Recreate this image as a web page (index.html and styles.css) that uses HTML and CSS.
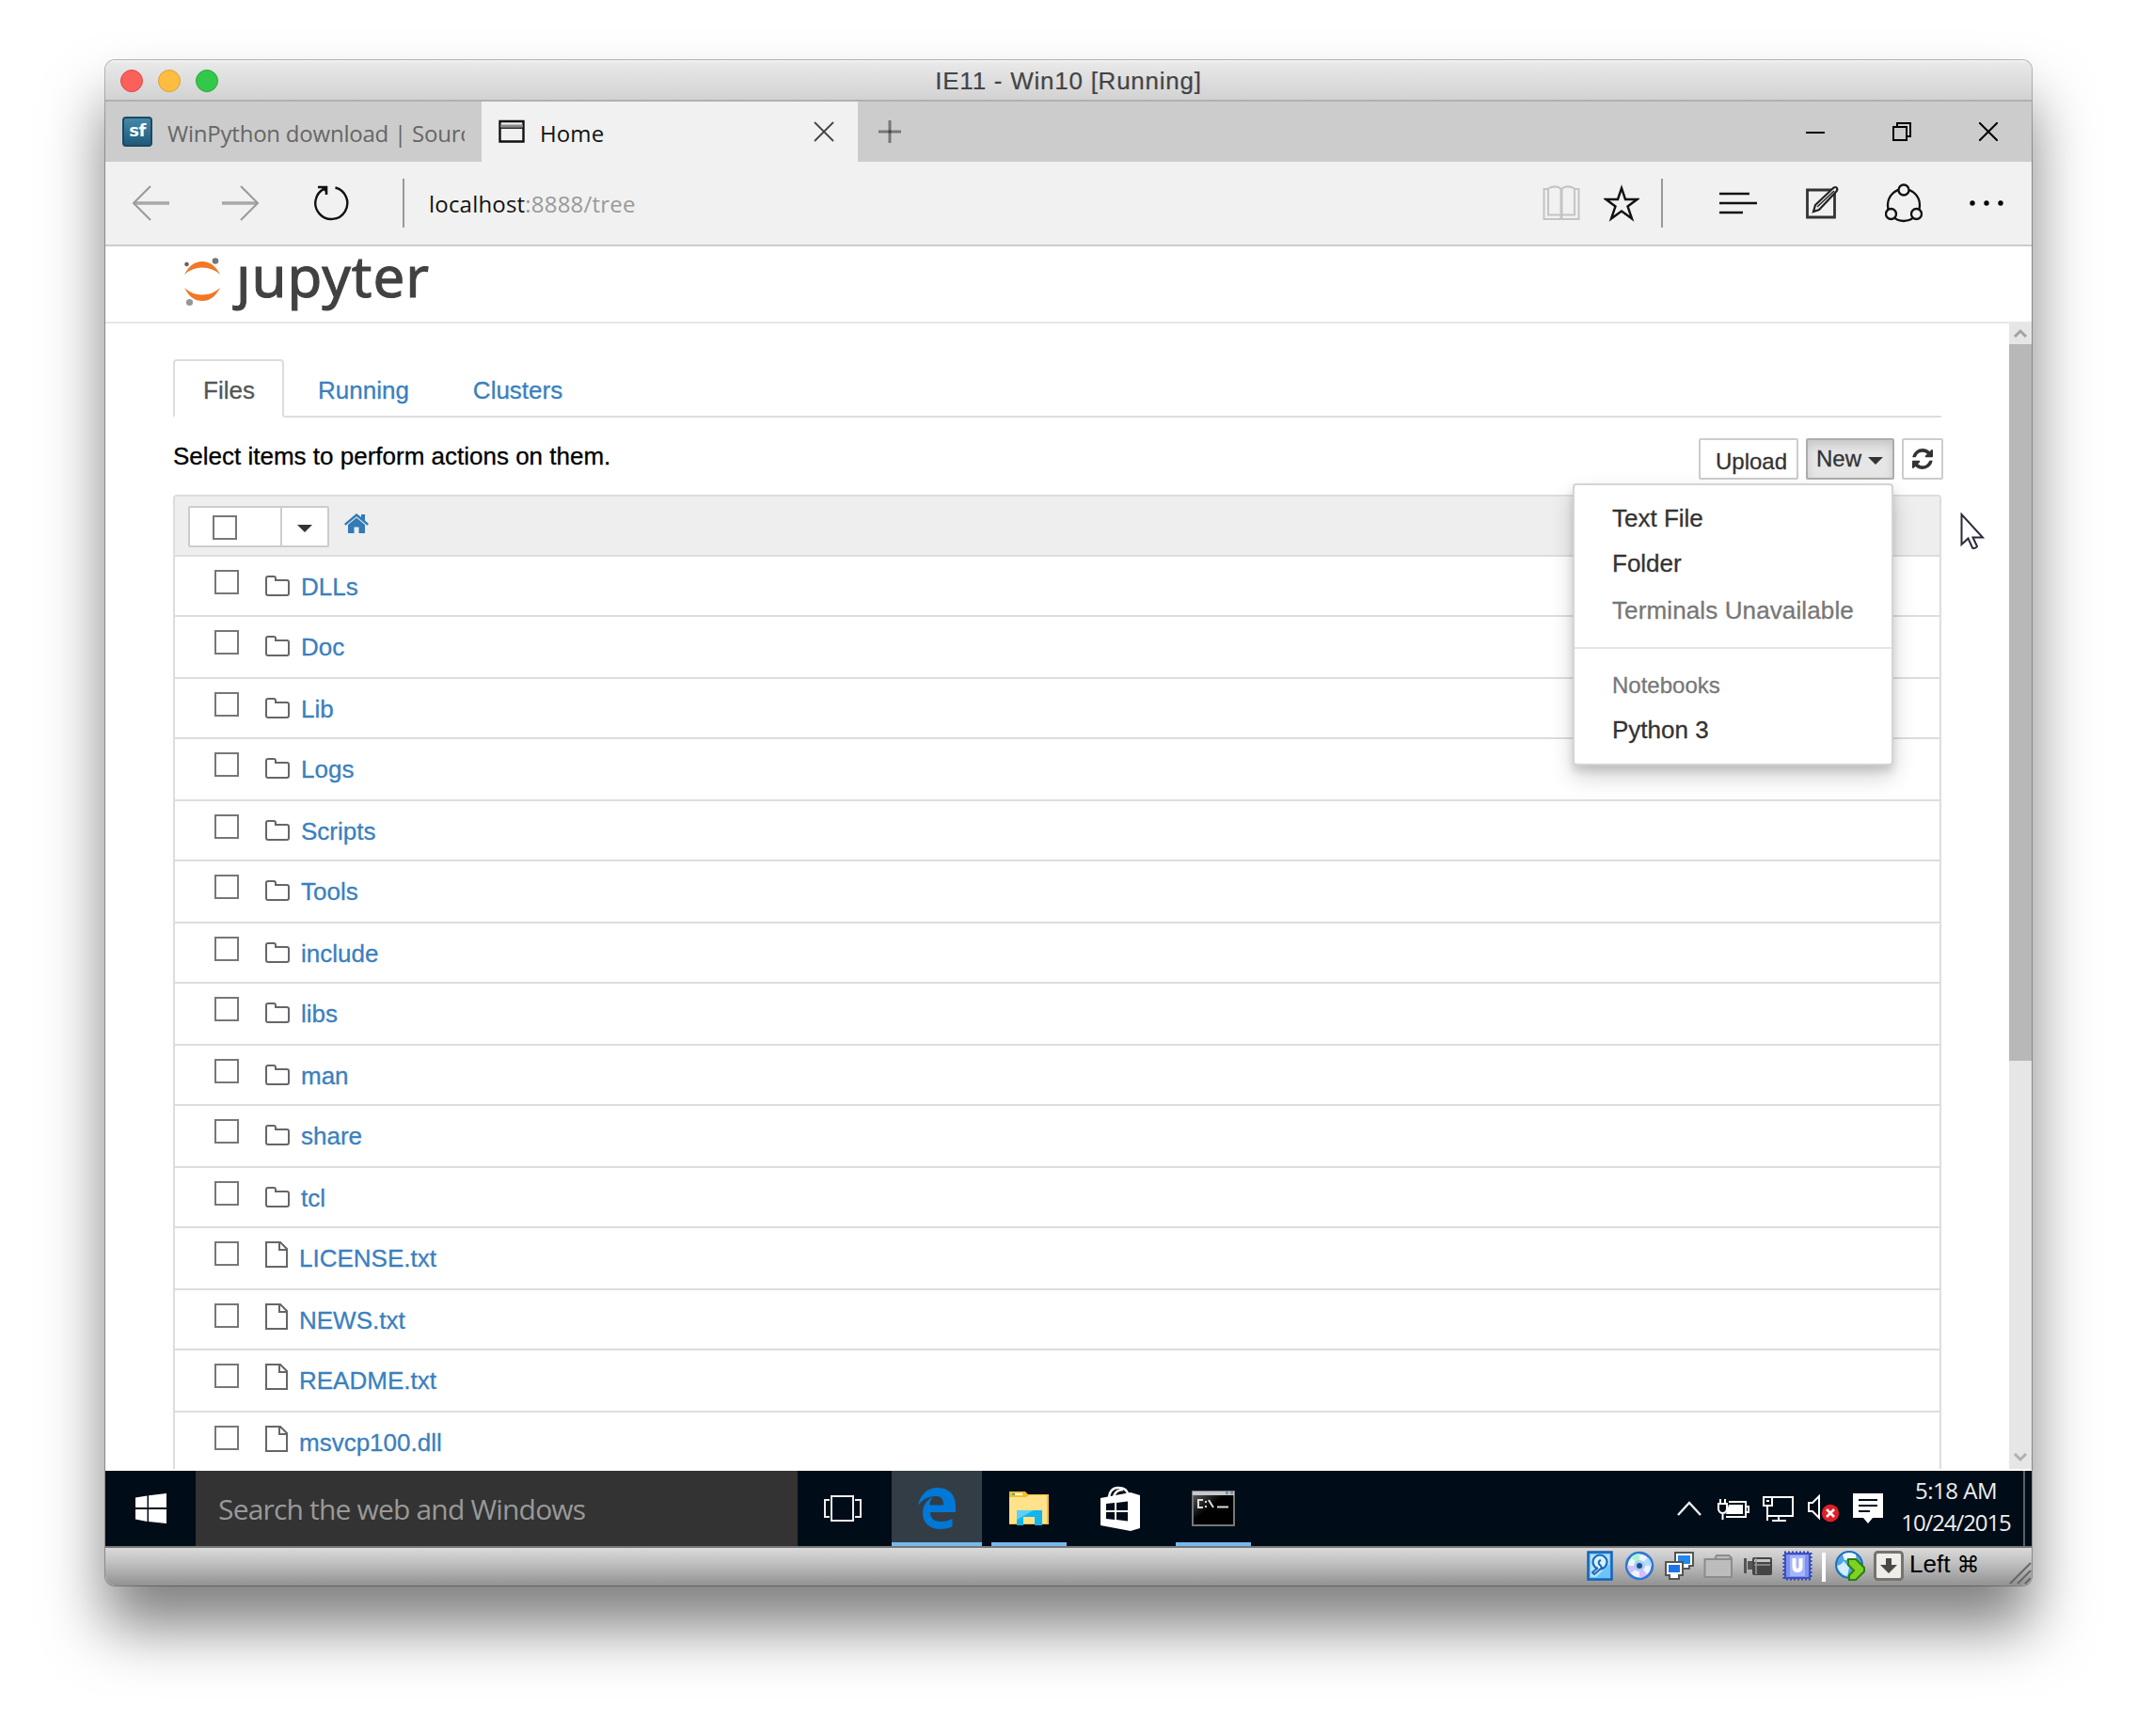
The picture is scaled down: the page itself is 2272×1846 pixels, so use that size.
FILE: index.html
```html
<!DOCTYPE html>
<html lang="en">
<head>
<meta charset="utf-8">
<title>IE11 - Win10 [Running]</title>
<link rel="stylesheet" href="styles.css">
</head>
<body>
<div class="window">
  <header class="titlebar">
    <div class="lights"><i class="light red"></i><i class="light amber"></i><i class="light green"></i></div>
    <span class="title">IE11 - Win10 [Running]</span>
  </header>

  <div class="tabbar">
    <div class="btab">
      <span class="favicon">sf</span>
      <span class="btab-text">WinPython download | SourceForge</span>
    </div>
    <div class="btab active">
      <svg class="home-ico" width="28" height="26" viewBox="0 0 28 26"><path d="M1.500 2h25v21.500h-25z" fill="none" stroke="#111" stroke-width="2.400"/><path d="M2 7h24" stroke="#888" stroke-width="3"/><path d="M2 9.200h24" stroke="#222" stroke-width="1.500"/></svg>
      <span class="btab-text">Home</span>
      <svg class="tab-close" width="22" height="22" viewBox="0 0 22 22"><path d="M1 1l20 20M21 1L1 21" stroke="#444" stroke-width="1.800"/></svg>
    </div>
    <svg class="newtab" width="24" height="24" viewBox="0 0 24 24"><path d="M12 0v24M0 12h24" stroke="#777" stroke-width="3"/><path d="M10.500 10.500h3v3h-3z" fill="#444"/></svg>
    <div class="winbtns">
      <svg width="20" height="20" viewBox="0 0 20 20"><path d="M0 11h20" stroke="#000" stroke-width="2"/></svg>
      <svg width="20" height="20" viewBox="0 0 20 20"><path d="M1 5h14v14H1zM5 5V1h14v14h-4" fill="none" stroke="#000" stroke-width="2"/></svg>
      <svg width="20" height="20" viewBox="0 0 20 20"><path d="M0 0l20 20M20 0L0 20" stroke="#000" stroke-width="2"/></svg>
    </div>
  </div>

  <div class="toolbar">
    <svg class="back" width="40" height="38" viewBox="0 0 40 38"><path d="M2 19h38" stroke="#a8a8a8" stroke-width="3.500"/><path d="M20 1L2 19l18 18" fill="none" stroke="#999" stroke-width="2"/></svg>
    <svg class="fwd" width="40" height="38" viewBox="0 0 40 38"><path d="M0 19h38" stroke="#a8a8a8" stroke-width="3.500"/><path d="M20 1l18 18-18 18" fill="none" stroke="#999" stroke-width="2"/></svg>
    <svg class="reload" width="38" height="38" viewBox="0 0 38 38"><path d="M23.500 2.500A17 17 0 1 1 12 3.600" fill="none" stroke="#111" stroke-width="2.400"/><path d="M5 2h9v8" fill="none" stroke="#111" stroke-width="2.600"/><path d="M7 1h8v8z" fill="#111"/></svg>
    <i class="vline"></i>
    <span class="url">localhost<span>:8888/tree</span></span>
    <div class="tools">
      <svg class="t-book" width="40" height="38" viewBox="0 0 40 38"><g fill="none" stroke="#c4c4c4" stroke-width="2"><path d="M6 4H1.500v32h37V4H34M6 31.500V3.500Q14 -1 20 4q6-5 14-.5v28H6z"/><path d="M20 4v31" stroke-width="3"/></g></svg>
      <svg class="t-star" width="38" height="40" viewBox="0 0 38 40"><path d="M19 4l4 12h12.500L25.500 23.500l4.500 13L19 28.500 8 36.500l4.500-13L2.500 16H15z" fill="none" stroke="#111" stroke-width="2.400"/></svg>
      <i class="vline t-line"></i>
      <svg class="t-hub" width="40" height="26" viewBox="0 0 40 26"><path d="M0 3h32M0 13h40M0 23h25" stroke="#111" stroke-width="2.600"/></svg>
      <svg class="t-note" width="36" height="38" viewBox="0 0 36 38"><path d="M1.500 5h29v29h-29z" fill="none" stroke="#333" stroke-width="2.800"/><path d="M8 28l2-7L29 3q3-2 4 0 1 2-1 4L14 26z" fill="#f1f1f1" stroke="#222" stroke-width="2.200"/><path d="M12 23L30 6" stroke="#222" stroke-width="1.500"/></svg>
      <svg class="t-share" width="40" height="42" viewBox="0 0 40 42"><g fill="none" stroke="#111" stroke-width="2.300"><circle cx="20" cy="23" r="17"/><g fill="#f1f1f1"><circle cx="20" cy="7" r="5.500"/><circle cx="6.500" cy="32.500" r="5.500"/><circle cx="33.500" cy="32.500" r="5.500"/></g></g></svg>
      <svg class="t-dots" width="38" height="8" viewBox="0 0 38 8"><circle cx="4" cy="4" r="2.700"/><circle cx="19" cy="4" r="2.700"/><circle cx="34" cy="4" r="2.700"/></svg>
    </div>
  </div>

  <div class="site-header">
    <svg class="planet" width="40" height="52" viewBox="0 0 40 52"><g fill="#f37726"><path d="M1 18Q8 4 20 4t19 14Q31 10.500 20 10.500T1 18z"/><path d="M1 32q7 14 19 14t19-14q-8 7.500-19 7.500T1 32z"/></g><circle cx="3.500" cy="7" r="2.300" fill="#616262"/><circle cx="34" cy="3.500" r="3.300" fill="#767677"/><circle cx="6.500" cy="47.500" r="3.600" fill="#989798"/></svg>
    <span class="wordmark">jupyter</span>
  </div>

  <div class="site">
    <main class="content">
      <nav class="tabs">
        <a class="tab current">Files</a><a class="tab">Running</a><a class="tab">Clusters</a>
      </nav>
      <div class="actions">
        <span class="hint">Select items to perform actions on them.</span>
        <div class="buttons">
          <span class="btn upload">Upload</span>
          <div class="dropdown">
            <span class="btn new">New<i class="caret"></i></span>
            <ul class="menu">
              <li>Text File</li>
              <li>Folder</li>
              <li class="disabled">Terminals Unavailable</li>
              <li class="divider"></li>
              <li class="heading">Notebooks</li>
              <li>Python 3</li>
            </ul>
          </div>
          <span class="btn refresh"><svg width="22" height="22" viewBox="0 0 1536 1536"><path fill="#333" d="M1511 928q0 5-1 7-64 268-268 434.500T764 1536q-146 0-282.500-55T238 1324l-129 129q-19 19-45 19t-45-19-19-45V960q0-26 19-45t45-19h448q26 0 45 19t19 45-19 45l-137 137q71 66 161 102t187 36q134 0 250-65t186-179q11-17 53-117 8-23 30-23h192q13 0 22.500 9.500t9.500 22.500zm25-800v448q0 26-19 45t-45 19h-448q-26 0-45-19t-19-45 19-45l138-138Q969 256 768 256q-134 0-250 65T332 500q-11 17-53 117-8 23-30 23H50q-13 0-22.500-9.500T18 608v-7q65-268 270-434.500T768 0q146 0 284 55.500T1297 212l130-129q19-19 45-19t45 19 19 45z"/></svg></span>
        </div>
      </div>
      <div class="list">
        <div class="list-head">
          <div class="selector"><span class="sel-box"><i class="check"></i></span><span class="sel-caret"><i class="caret"></i></span></div>
          <svg class="house" width="26" height="22" viewBox="0 0 26 22"><path fill="#337ab7" d="M13 4.500l9 7.500v9h-6.500v-6.500h-5V21H4v-9z"/><path fill="#337ab7" d="M13 0l5 4V1h4v6.500l4 3.500-1.500 1.800L13 3.200 1.500 12.800 0 11z"/></svg>
        </div>
        <div class="row"><i class="check"></i><svg class="folder"><use href="#folder"/></svg><a>DLLs</a></div>
        <div class="row"><i class="check"></i><svg class="folder"><use href="#folder"/></svg><a>Doc</a></div>
        <div class="row"><i class="check"></i><svg class="folder"><use href="#folder"/></svg><a>Lib</a></div>
        <div class="row"><i class="check"></i><svg class="folder"><use href="#folder"/></svg><a>Logs</a></div>
        <div class="row"><i class="check"></i><svg class="folder"><use href="#folder"/></svg><a>Scripts</a></div>
        <div class="row"><i class="check"></i><svg class="folder"><use href="#folder"/></svg><a>Tools</a></div>
        <div class="row"><i class="check"></i><svg class="folder"><use href="#folder"/></svg><a>include</a></div>
        <div class="row"><i class="check"></i><svg class="folder"><use href="#folder"/></svg><a>libs</a></div>
        <div class="row"><i class="check"></i><svg class="folder"><use href="#folder"/></svg><a>man</a></div>
        <div class="row"><i class="check"></i><svg class="folder"><use href="#folder"/></svg><a>share</a></div>
        <div class="row"><i class="check"></i><svg class="folder"><use href="#folder"/></svg><a>tcl</a></div>
        <div class="row"><i class="check"></i><svg class="file"><use href="#file"/></svg><a>LICENSE.txt</a></div>
        <div class="row"><i class="check"></i><svg class="file"><use href="#file"/></svg><a>NEWS.txt</a></div>
        <div class="row"><i class="check"></i><svg class="file"><use href="#file"/></svg><a>README.txt</a></div>
        <div class="row"><i class="check"></i><svg class="file"><use href="#file"/></svg><a>msvcp100.dll</a></div>
      </div>
    </main>
    <div class="scrollbar">
      <svg width="24" height="22" viewBox="0 0 24 22"><path d="M6 14l6-6 6 6" fill="none" stroke="#a3a3a3" stroke-width="3"/></svg>
      <i class="thumb"></i>
      <svg class="down" width="24" height="22" viewBox="0 0 24 22"><path d="M6 6l6 6 6-6" fill="none" stroke="#b0b0b0" stroke-width="3"/></svg>
    </div>
  </div>

  <div class="taskbar">
    <div class="start"><svg width="33" height="32" viewBox="0 0 33 32"><path fill="#fff" d="M0 4.500L12.500 2.500V15H0zM14 2.200L33 0v15H14zM0 17h12.500v13L0 27.500zM14 17h19v15L14 30z"/></svg></div>
    <div class="search">Search the web and Windows</div>
    <div class="app view"><svg width="42" height="28" viewBox="0 0 42 28"><path d="M9 1h23v26H9zM7 5H2v18h5M34 5h6v18h-6" fill="none" stroke="#eee" stroke-width="2"/></svg></div>
    <div class="app edge"><svg width="40" height="44" viewBox="0 0 40 44"><path fill="#0078d7" d="M0 19C2 8 9 0 21 0c13 0 19 9 19 19v7H13c0 8 6 10 12 10 4 0 8-1 11.500-3v8.500C33 43 28 44 24 44 12 44 5 37 5 27c0-8 4-14 11-17-3 3-3.500 6-3.500 8.500H27C27 12 25 9 19 9 11 9 4 13 0 19z"/></svg></div>
    <div class="app open"><svg width="44" height="37" viewBox="0 0 44 37"><path fill="#f3bf2e" d="M1 0h17l3 3h22v32H1z"/><path fill="#ffe28c" d="M1 6h18l3-2h19v30H1z"/><path fill="#fff" d="M6 2h9v2H6z"/><path fill="#41b58f" d="M4 2h3v2H4z"/><path fill="#12b5ee" d="M9 20h27v16h-8v-9H16v9H9z"/><path fill="#5cd0f5" d="M9 20h18L9 30z"/></svg></div>
    <div class="app"><svg width="43" height="49" viewBox="0 0 43 49"><path d="M9 14C9 6 13 1.500 20 2c6 0 9 4 10 9M14 12c1-5 5-8 10-8" fill="none" stroke="#fff" stroke-width="2.600"/><path fill="#fff" d="M0 13l32-6 10 3v35l-10 3-32-6z"/><path fill="#000c18" d="M6 19l9-1v8H6zM17 18l12-1.500V26H17zM6 28h9v8l-9-1zM17 28h12v9.500L17 36z"/></svg></div>
    <div class="app open"><svg width="46" height="38" viewBox="0 0 46 38"><defs><linearGradient id="cmd" x1="0" y1="0" x2="1" y2="1"><stop offset="0" stop-color="#666"/><stop offset=".45" stop-color="#000"/></linearGradient></defs><path fill="url(#cmd)" stroke="#777" stroke-width="2" d="M1 1h44v36H1z"/><path fill="#c5c9cc" d="M1 1h44v4H1z"/><path fill="#7b93a8" d="M36 1h3v3h-3zM41 1h3v3h-3z"/><path d="M12 10H7v8h5M15 11v2M15 16v2M18 10l5 8M27 17.500h12" fill="none" stroke="#ddd" stroke-width="2"/></svg></div>
    <div class="tray">
      <svg class="chev" width="26" height="16" viewBox="0 0 26 16"><path d="M1 15L13 2l12 13" fill="none" stroke="#eee" stroke-width="2.400"/></svg>
      <svg width="34" height="26" viewBox="0 0 34 26"><path d="M1 8h9v6q-1 4-4.500 4T1 14zM3 3v5M8 3v5M5.500 18v7" fill="none" stroke="#fff" stroke-width="2"/><path d="M9 22h21V6H12M31 11h2v6h-2" fill="none" stroke="#fff" stroke-width="2"/><path d="M12 9h15v10H9z" fill="#fff"/></svg>
      <svg width="34" height="28" viewBox="0 0 34 28"><path d="M10 2h22v20H6M1 2h9v9H1zM5 11v16M17 22v4M10 27h15M4 6h3" fill="none" stroke="#fff" stroke-width="2"/></svg>
      <svg width="34" height="30" viewBox="0 0 34 30"><path d="M1 9h4l7-7v23l-7-7H1z" fill="none" stroke="#fff" stroke-width="2"/><circle cx="24" cy="20" r="9.200" fill="#e01f26"/><path d="M20 16l8 8M28 16l-8 8" stroke="#fff" stroke-width="2.500"/></svg>
      <svg width="32" height="32" viewBox="0 0 32 32"><path fill="#fff" d="M0 0h32v26H21l-5 6-5-6H0z"/><path d="M6 7h20M6 13h20M6 19h12" stroke="#000c18" stroke-width="2.200"/></svg>
      <div class="clock"><span>5:18 AM</span><span>10/24/2015</span></div>
      <i class="desk"></i>
    </div>
  </div>

  <footer class="status">
    <span class="slot"><svg width="28" height="32" viewBox="0 0 28 32"><rect x="1.500" y="1.500" width="25" height="29" fill="#6cc4fb" stroke="#1463b8" stroke-width="2.500"/><path d="M4 4h20v10L10 28H4z" fill="#b5e2ff"/><circle cx="14" cy="12" r="7.500" fill="#d5f0ff" stroke="#1c66b5" stroke-width="2.200"/><path d="M15 10q-3 1-2 4 2 2 3 4l-8 7-2-2 6-5" fill="#fff" stroke="#1c66b5" stroke-width="2"/></svg></span>
    <span class="slot"><svg width="32" height="32" viewBox="0 0 32 32"><circle cx="16" cy="16" r="13.800" fill="#eef4fd" stroke="#3079d3" stroke-width="2.800"/><path d="M16 16L7 7q4-4 9-4z" fill="#a9f5d0"/><path d="M16 16l9-9q4 4 4 9z" fill="#b5dcff"/><path d="M16 16l8 9q-4 4-8 4z" fill="#dcb9fb"/><path d="M16 16l-9 8q-4-4-4-8z" fill="#d5c0fa"/><circle cx="16" cy="16" r="6" fill="#a9cdf5"/><circle cx="16" cy="16" r="3" fill="#1b4f94"/></svg></span>
    <span class="slot"><svg width="32" height="32" viewBox="0 0 32 32"><path d="M12 2h19v14h-4v3h-9v-3h-6z" fill="#fff" stroke="#555" stroke-width="2"/><path d="M15 5h13v9H15z" fill="#2286ee"/><path d="M2 12h18v14h-4v4H6v-4H2z" fill="#fff" stroke="#555" stroke-width="2"/><path d="M5 15h12v8H5z" fill="#1c75e8"/></svg></span>
    <span class="slot"><svg width="32" height="30" viewBox="0 0 32 30"><path d="M1.500 27V8H12l2-4h13l3 3v20z" fill="#bcbcbc" stroke="#8c8c8c" stroke-width="2"/><path d="M12 8h17" stroke="#8c8c8c" stroke-width="2"/></svg></span>
    <span class="slot"><svg width="32" height="26" viewBox="0 0 32 26"><path d="M1 5h3v16H1zM5 8h6v9H5z" fill="#555"/><rect x="10" y="4" width="21" height="19" rx="2" fill="#454545"/><path d="M12 6h17v3H12z" fill="#c5c5c5"/><path d="M12 12h17M14 5v17" stroke="#999" stroke-width="1.500"/></svg></span>
    <span class="slot"><svg width="32" height="32" viewBox="0 0 32 32"><rect x="2" y="2" width="28" height="28" fill="none" stroke="#3448b5" stroke-width="3" stroke-dasharray="2 2"/><rect x="3" y="3" width="26" height="26" rx="2" fill="#7e92f0" stroke="#3d50bd" stroke-width="2"/><path d="M8 5h16v22H8z" fill="#a5b5fa"/><path d="M12.500 8v9q0 4 3.500 4t3.500-4V8" fill="none" stroke="#fff" stroke-width="4"/></svg></span>
    <i class="sep"></i>
    <svg class="globe" width="34" height="34" viewBox="0 0 34 34"><circle cx="16" cy="16" r="14" fill="#4fa5e2" stroke="#1d6fbd" stroke-width="2"/><path d="M9 5q7-4 14 0l1 8-8-3-5 1z" fill="#e9f7ff"/><path d="M3 17q5-1 7-5l6 7-2 9q-9-2-11-11z" fill="#d2eefc"/><path d="M15 10h8l9 9v4l-9 9h-7v-5l5-5-6-6z" fill="#7ed321" stroke="#2e7d14" stroke-width="2"/></svg>
    <svg class="host" width="32" height="32" viewBox="0 0 32 32"><rect x="1.500" y="1.500" width="29" height="29" rx="3" fill="#efedea" stroke="#77736d" stroke-width="3"/><path d="M13 8h6v7h6l-9 9-9-9h6z" fill="#4c4843"/></svg>
    <span class="hostkey">Left <b>⌘</b></span>
    <svg class="grip" width="24" height="24" viewBox="0 0 24 24"><path d="M1 23L23 1M9 23L23 9M17 23l6-6" stroke="#666" stroke-width="2"/></svg>
  </footer>

  <svg class="cursor" width="26" height="40" viewBox="0 0 26 40"><path d="M1.500 2v32l7-6.500 4.500 10q3 1.500 5-1.500l-4.500-9.500H24z" fill="#fff" stroke="#2b2b3a" stroke-width="2"/></svg>
</div>

<svg class="defs" width="0" height="0">
  <symbol id="folder" viewBox="0 0 26 22"><path d="M1 3q0-2 2-2h6q2 0 2 2v2h12q2 0 2 2v12q0 2-2 2H3q-2 0-2-2z" fill="none" stroke="#666" stroke-width="2"/></symbol>
  <symbol id="file" viewBox="0 0 24 28"><path d="M1 1h15l7 7v19H1zM15 1v8h8" fill="none" stroke="#666" stroke-width="2"/></symbol>
</svg>
</body>
</html>
```

FILE: styles.css
```css
* { box-sizing: border-box; }
body {
  margin: 0;
  width: 2272px;
  height: 1846px;
  padding: 64px 112px;
  overflow: hidden;
  background: #fff;
  font-family: "Liberation Sans", Arial, sans-serif;
  font-size: 26px;
}
svg, i { display: block; flex: none; }
.defs { position: absolute; }

.window {
  position: relative;
  width: 2048px;
  height: 1622px;
  border-radius: 10px;
  background: #fff;
  box-shadow: 0 0 0 1px rgba(0, 0, 0, .28), 0 44px 64px rgba(0, 0, 0, .5);
}

/* Host window title */
.titlebar {
  height: 44px;
  display: grid;
  grid-template-columns: 1fr auto 1fr;
  align-items: center;
  border-bottom: 2px solid #b0b0b0;
  border-radius: 10px 10px 0 0;
  background: linear-gradient(#f4f4f4, #e8e8e8 8%, #d2d2d2);
}
.lights { display: flex; gap: 16px; padding-left: 16px; }
.light { width: 24px; height: 24px; border-radius: 50%; border: 1px solid; }
.red { background: #fc605b; border-color: #df4744; }
.amber { background: #fdbd40; border-color: #de9f34; }
.green { background: #34c84a; border-color: #27aa35; }
.title { color: #444; line-height: 44px; letter-spacing: .75px; -webkit-text-stroke: .2px; }

/* Browser tab strip */
.tabbar {
  height: 64px;
  display: flex;
  align-items: center;
  background: #ccc;
  font-family: "Open Sans", "Noto Sans", sans-serif;
  font-size: 24px;
}
.btab {
  width: 400px;
  height: 64px;
  padding: 0 18px;
  display: flex;
  align-items: center;
  color: #666;
}
.btab-text {
  flex: 1;
  overflow: hidden;
  white-space: nowrap;
  line-height: 60px;
  padding-top: 4px;
  letter-spacing: -.22px;
}
.favicon {
  width: 32px;
  height: 32px;
  margin-right: 16px;
  flex: none;
  border: 2px solid #1b4a63;
  border-radius: 4px;
  background: linear-gradient(#4388ab, #215a78);
  color: #fff;
  font: bold 18px/26px "DejaVu Sans", sans-serif;
  letter-spacing: -.5px;
  text-align: center;
}
.active { background: #f1f1f1; color: #111; padding-right: 25px; }
.active .btab-text { letter-spacing: .1px; }
.home-ico { margin-right: 16px; }
.newtab { margin-left: 22px; }
.winbtns { display: flex; gap: 72px; margin: 0 36px 0 auto; }

/* Browser toolbar */
.toolbar {
  height: 90px;
  display: flex;
  align-items: center;
  background: #f1f1f1;
  border-bottom: 2px solid #ccc;
  padding-left: 28px;
}
.fwd { margin-left: 56px; }
.reload { margin-left: 57px; }
.vline { width: 2px; height: 52px; background: #999; margin-left: 57px; }
.url {
  margin-left: 26px;
  font: 24px/88px "Open Sans", "Noto Sans", sans-serif;
  letter-spacing: .2px;
  padding-top: 1px;
  color: #111;
}
.url span { color: #999; }
.tools { display: flex; align-items: center; margin: 0 29px 0 auto; }
.t-star { margin-left: 25px; }
.t-line { margin-left: 23px; }
.t-hub { margin-left: 60px; }
.t-note { margin-left: 52px; }
.t-share { margin-left: 48px; }
.t-dots { margin-left: 49px; }

/* Page header */
.site-header {
  height: 82px;
  display: flex;
  padding: 12px 0 0 83px;
  border-bottom: 2px solid #e7e7e7;
}
.wordmark {
  margin: -23px 0 0 16px;
  font: 60px/84px "Noto Sans", "Open Sans", sans-serif;
  height: 84px;
  letter-spacing: 1px;
  color: #414042;
  -webkit-text-stroke: 1px #414042;
  /* the j of the wordmark has no dot */
  clip-path: polygon(-30px 29px, 20px 29px, 20px 0, 260px 0, 260px 100px, -30px 100px);
}

/* Page */
.site { height: 1220px; display: flex; border-bottom: 2px solid #fff; overflow: hidden; -webkit-text-stroke: .3px; }
.content { flex: 1; padding: 38px 72px 0; }
.scrollbar { width: 24px; background: #e6e6e6; display: flex; flex-direction: column; }
.thumb { height: 762px; background: #b8b8b8; }
.down { margin-top: auto; }

.tabs { height: 62px; display: flex; gap: 4px; border-bottom: 2px solid #ddd; }
.tab {
  height: 62px;
  padding: 3px 30px 0;
  border: 2px solid transparent;
  line-height: 56px;
  color: #3a80be;
}
.current { width: 118px; color: #555; background: #fff; border-color: #ddd #ddd #fff; border-radius: 4px 4px 0 0; }

.actions { height: 82px; padding-top: 22px; display: flex; justify-content: space-between; margin-right: -2px; }
.hint { line-height: 38px; color: #000; }
.buttons { display: flex; gap: 8px; height: 44px; }
.btn {
  height: 44px;
  display: flex;
  border: 2px solid #ccc;
  border-radius: 2px;
  font-size: 24px;
  line-height: 40px;
  color: #333;
}
.upload { width: 106px; padding: 3px 0 0 16px; }
.new {
  width: 94px;
  padding-left: 9px;
  background: #e6e6e6;
  border-color: #adadad;
  box-shadow: inset 0 6px 10px rgba(0, 0, 0, .125);
  align-items: center;
}
.caret { width: 0; border: 8px solid transparent; border-top-color: #333; border-bottom: 0; }
.new .caret { margin: 3px 0 0 7px; }
.refresh { width: 44px; padding-right: 1px; align-items: center; justify-content: center; }

.dropdown { position: relative; }
.menu {
  position: absolute;
  z-index: 2;
  top: 48px;
  right: 1px;
  width: 341px;
  height: 300px;
  margin: 0;
  padding: 10px 0;
  list-style: none;
  background: #fff;
  border: 2px solid #d4d4d4;
  border-radius: 4px;
  box-shadow: 0 12px 24px rgba(0, 0, 0, .175), 0 6px 8px rgba(0, 0, 0, .12);
  color: #333;
}
.menu li { padding-left: 40px; height: 48px; line-height: 50px; white-space: nowrap; }
.menu .disabled { line-height: 52px; height: 52px; color: #777; margin-top: 1px; letter-spacing: .12px; }
.menu .divider { height: 2px; background: #e5e5e5; margin: 13px 0 14px; padding: 0; }
.menu .heading { color: #777; font-size: 24px; height: 47px; }

.list { border: 2px solid #ddd; border-radius: 4px 4px 0 0; }
.list-head { height: 64px; display: flex; background: #eee; border-bottom: 2px solid #ddd; padding: 10px 0 0 14px; }
.selector { width: 150px; height: 44px; display: flex; border: 2px solid #ccc; background: #fff; border-radius: 2px; }
.sel-box { width: 98px; padding: 8px 0 0 24px; border-right: 2px solid #ccc; }
.sel-caret { flex: 1; display: flex; align-items: center; justify-content: center; padding-top: 4px; }
.check { width: 26px; height: 26px; border: 2px solid #777; background: #fff; }
.house { margin: 8px 0 0 16px; }
.row { height: 64px; display: flex; align-items: flex-start; border-bottom: 2px solid #ddd; padding-left: 42px; }
.row:nth-child(odd) { height: 66px; }
.row .check { margin-top: 14px; }
.folder { width: 26px; height: 22px; margin: 20px 12px 0 28px; }
.file { width: 24px; height: 28px; margin: 14px 12px 0 28px; }
.row a { line-height: 64px; height: 60px; color: #3a80be; }

/* Guest taskbar */
.taskbar {
  height: 80px;
  display: flex;
  background: #000c18;
  font-family: "Open Sans", "Noto Sans", sans-serif;
}
.start { width: 96px; display: grid; place-items: center; }
.search { width: 640px; padding: 1px 0 0 24px; background: #333; color: #999; font-size: 30px; line-height: 80px; letter-spacing: -.82px; }
.app { width: 80px; margin: 0 9px; display: grid; place-items: center; border-bottom: 4px solid transparent; padding: 4px 1px 0 0; }
.view { width: 100px; margin: 0; padding-right: 4px; }
.edge { width: 96px; margin: 0 1px 0 0; background: #333d46; border-color: #76b9ed; }
.open { border-color: #76b9ed; }
.tray { margin-left: auto; display: flex; align-items: center; gap: 14px; }
.chev { margin-right: 3px; }
.clock {
  width: 129px;
  display: flex;
  flex-direction: column;
  align-items: center;
  font-size: 24px;
  line-height: 34px;
  letter-spacing: -1.1px;
  color: #eee;
  padding: 0 2px 5px 0;
}
.clock span:first-child { letter-spacing: -.5px; }
.desk { width: 2px; height: 80px; background: #5a6068; margin: 0 7px 0 -8px; }

/* Host status bar */
.status {
  height: 42px;
  display: flex;
  align-items: center;
  padding-left: 1568px;
  border-top: 2px solid #777;
  border-radius: 0 0 10px 10px;
  background: linear-gradient(#dadada, #c0c0c0 40%, #929292);
}
.status svg { margin-bottom: 2px; }
.slot { width: 42px; display: grid; place-items: center; }
.sep { width: 4px; height: 31px; background: #fff; margin: 0 9px 0 5px; }
.status .host { margin-left: 8px; }
.hostkey { margin-left: 6px; line-height: 34px; height: 40px; color: #000; white-space: nowrap; }
.hostkey b { font: 24px "DejaVu Sans", sans-serif; }
.status .grip { margin: 14px 0 0 auto; }

.cursor { position: absolute; left: 1972px; top: 481px; z-index: 3; }
```
